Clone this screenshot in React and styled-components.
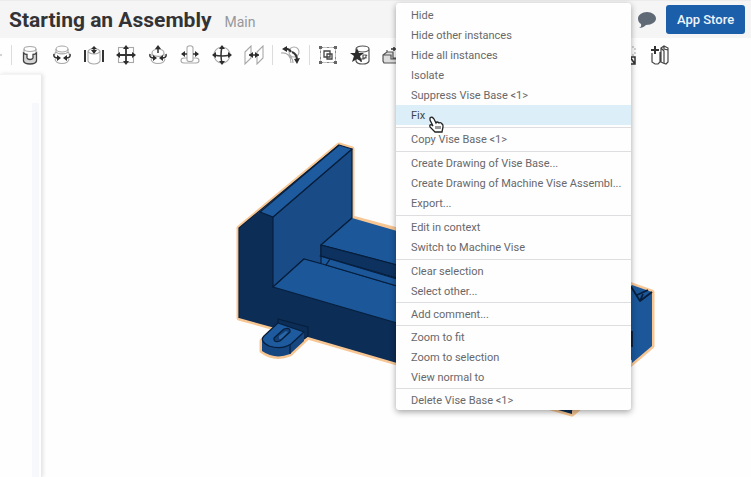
import React from "react";
import styled, { createGlobalStyle } from "styled-components";

const GlobalStyle = createGlobalStyle`
  * { box-sizing: border-box; }
  body {
    margin: 0;
    background: #fefefe;
    font-family: Roboto, "Liberation Sans", sans-serif;
    overflow: hidden;
  }
`;

const Page = styled.div`
  min-height: 100vh;
  display: flex;
  flex-direction: column;
`;

const Header = styled.header`
  height: 38px;
  display: flex;
  align-items: center;
  gap: 9px;
  padding: 0 6px 0 9px;
  background: #f5f5f6;
  border-top: 1px solid #ececec;
`;

const Title = styled.h1`
  margin: 0;
  font-family: Roboto, sans-serif;
  font-size: 21px;
  line-height: 28px;
  font-weight: 700;
  color: #333335;
  white-space: nowrap;
`;

const Workspace = styled.span`
  flex: 1;
  padding: 5px 0 0 4px;
  font-size: 14px;
  line-height: 18px;
  color: #97979a;
`;

const IconButton = styled.button`
  display: flex;
  padding: 0;
  border: 0;
  background: none;
`;

const StoreButton = styled.button`
  width: 79px;
  height: 29px;
  padding: 0;
  border: 0;
  border-radius: 3px;
  background: #1b5faa;
  color: #edf4fc;
  font: 500 13px/29px Roboto, sans-serif;
`;

const Toolbar = styled.nav`
  height: 36px;
  display: flex;
  align-items: center;
  padding-bottom: 2px;
  overflow: hidden;
`;

const Tool = styled.button`
  flex: none;
  width: 32px;
  height: 32px;
  display: flex;
  align-items: center;
  justify-content: center;
  padding: 0;
  border: 0;
  background: none;
`;

const Leading = styled.div`
  flex: none;
  width: 9px;
  display: flex;
  justify-content: flex-end;
  padding-right: 7px;
`;

const Separator = styled.span`
  flex: none;
  width: 1px;
  height: 20px;
  margin: 0 2px;
  background: #dcdcdc;
`;

const ToolGap = styled.span`
  flex: none;
  width: 204px;
`;

const Workbench = styled.main`
  flex: 1;
  display: flex;
  align-items: stretch;
`;

const Sidebar = styled.aside`
  flex: none;
  width: 42px;
  display: flex;
  justify-content: flex-end;
  padding: 28px 2px 0 0;
  border-top: 1px solid #f4f4f4;
  border-right: 1px solid #e9e9e9;
  box-shadow: 1px 0 4px rgba(0, 0, 0, 0.12);
`;

const ScrollTrack = styled.div`
  width: 7px;
  background: #f7f8fb;
`;

const Viewport = styled.section`
  flex: 1;
  min-width: 0;
  padding: 64px 0 0 188px;
`;

const Menu = styled.div`
  position: absolute;
  top: 3px;
  left: 396px;
  width: 235px;
  padding: 1px 0 0;
  border-radius: 3px;
  background: #fefefe;
  box-shadow: 0 2px 6px rgba(0, 0, 0, 0.36);
`;

const MenuGroup = styled.div`
  padding: 1px 0 ${(p) => (p.$tight ? 1 : 2)}px;
  & + & { border-top: 1px solid #dedee0; }
  &:last-child { padding-bottom: 0; }
`;

const MenuItem = styled.button`
  display: block;
  width: 100%;
  height: 20px;
  padding: 2px 4px 0 15px;
  border: 0;
  background: ${(p) => (p.$active ? "#dceff9" : "transparent")};
  color: ${(p) => (p.$active ? "#3c444c" : "#68686b")};
  font: 400 11px/18px Roboto, sans-serif;
  text-align: left;
  white-space: nowrap;
`;

const Pointer = styled.svg`
  position: absolute;
  top: 116px;
  left: 428px;
`;

const L = { fill: "none", stroke: "#a8a8a8", strokeWidth: 1.1 };
const D = { fill: "none", stroke: "#333", strokeWidth: 1.5 };
const F = { fill: "#2d2d2d" };

const glyphs = {
  fasten: (
    <>
      <path {...L} d="M4 4v5M16 4v5" />
      <ellipse {...L} cx="10" cy="4" rx="6" ry="2.500" />
      <path d="M3.500 8v8c1 4 12 4 13 0V8c-1 1-2 1.500-3.500 1.500v3.500c-1 2-5 2-6 0V9.500C5.500 9.500 4.500 9 3.500 8z" fill="#d4d4d4" stroke="#444" strokeWidth="1.300" />
    </>
  ),
  revolute: (
    <>
      <ellipse {...L} cx="10" cy="4" rx="6" ry="3" />
      <path {...L} d="M4 4v3q-2 2-1 3M16 4v3q2 2 1 3M4 7c2 2.500 10 2.500 12 0M3 14c1 6 13 6 14 0" />
      <path {...D} d="M2 9q-1 4 4 4M18 9q1 4-4 4" />
      <path {...F} d="M5 10l4 3-4 3zM15 10l-4 3 4 3z" />
    </>
  ),
  slider: (
    <>
      <path {...L} d="M4 6v10c2 4 10 4 12 0V6M4 6c2-3 10-3 12 0-2 4-10 4-12 0" />
      <path d="M1 5v12M19 5v12" {...D} strokeWidth="2" />
      <path {...D} d="M10 8V2" />
      <path {...F} d="M7 4l3-3 3 3zM7 5h6l-3 4z" />
    </>
  ),
  planar: (
    <>
      <rect {...L} x="2.500" y="2.500" width="15" height="15" />
      <path {...D} d="M10 3v14M3 10h14" strokeWidth="1.800" />
      <path {...F} d="M7 4l3-4 3 4zM7 16l3 4 3-4zM4 7l-4 3 4 3zM16 7l4 3-4 3z" />
    </>
  ),
  cylindrical: (
    <>
      <path {...L} d="M4 8v3M16 8v3M4 8c0-5 12-5 12 0s-12 4-12 0M3 14c1 6 13 6 14 0" />
      <path {...D} d="M10 8V2M2 9q-1 4 4 4M18 9q1 4-4 4" />
      <path {...F} d="M7 4l3-4 3 4zM5 10l4 3-4 3zM15 10l-4 3 4 3z" />
    </>
  ),
  pinslot: (
    <>
      <path {...L} d="M7 15V3c0-3 6-3 6 0v12c0 2-6 2-6 0zM7 13H4c-4 0-4 5 0 5h12c4 0 4-5 0-5h-3" />
      <path {...D} d="M2 9h5M13 9h5" />
      <path {...F} d="M5 6L1 9l4 3zM15 6l4 3-4 3z" />
    </>
  ),
  ball: (
    <>
      <circle {...L} cx="10" cy="10" r="8" />
      <path {...D} d="M10 2q-2 8 0 16M2 10q8 2 16 0" />
      <path {...F} d="M7 4l3-4 3 4zM7 16l3 4 3-4zM4 7l-4 3 4 3zM16 7l4 3-4 3z" />
    </>
  ),
  parallel: (
    <>
      <path {...L} d="M1 7l6-6v12l-6 6zM13 7l6-6v12l-6 6z" />
      <path {...D} d="M5 10h10" />
      <path {...F} d="M9 7l-4 3 4 3zM11 7l4 3-4 3z" />
    </>
  ),
  tangent: (
    <>
      <circle {...L} cx="13" cy="7" r="5" />
      <path {...L} d="M0 8c7-1 10 4 10 10M4 8c5 2 8 5 8 10" />
      <path {...D} d="M3 4q5-1 7 3M11 7q5 2 5 8" strokeWidth="2" />
      <path {...F} d="M6 1L1 4l5 3zM13 14l3 5 3-6z" />
    </>
  ),
  group: (
    <>
      <rect x="2.500" y="2.500" width="15" height="15" fill="none" stroke="#888" strokeDasharray="3 1 1 1" />
      <path d="M6 6h6v6H6zM9 9h5v5H9z" fill="none" stroke="#444" strokeWidth="1.300" />
      <path fill="#666" d="M1 1h3v3H1zM16 1h3v3h-3zM1 16h3v3H1zM16 16h3v3h-3z" />
    </>
  ),
  favorite: (
    <>
      <path fill="none" stroke="#555" strokeWidth="1.200" d="M6 4v12c1 4 12 4 13 0V4M6 4c0-4 13-4 13 0s-13 4-13 0M13 10h3v3h-3zM11 17v-3h3l3-4" />
      <path {...F} d="M7 3l2 5h5l-4 3 2 6-5-3-5 3 2-6-4-3h5z" />
    </>
  ),
  insert: (
    <>
      <path fill="#ddd" stroke="#555" strokeWidth="1.200" d="M1 10l4-3h6v6h8v5H2l-1-2zM5 7V5M1 10h8v4h9" />
      <path {...D} d="M12 6V2M9 4h6" />
    </>
  ),
  replicate: (
    <>
      <rect x="2" y="2" width="15" height="8" fill="none" stroke="#aaa" strokeDasharray="2 2" />
      <path fill="none" stroke="#333" strokeWidth="1.500" d="M12 12h5v7h-5zM12 12l5 7" />
    </>
  ),
  config: (
    <>
      <path fill="none" stroke="#444" strokeWidth="1.200" d="M2 8v9l3 2h3l2-2V7M11 3l3-2 4 2v14l-2 2-3-1-2-1zM11 3l3 3v12M14 1v3l4 1" />
      <path {...D} d="M5 1v8M1 5h8" strokeWidth="2" />
    </>
  ),
};

const Glyph = ({ name }) => (
  <svg width="20" height="20" viewBox="0 0 20 20" aria-hidden="true">{glyphs[name]}</svg>
);

const ToolItem = ({ name }) => (
  <Tool type="button" aria-label={name}><Glyph name={name} /></Tool>
);

const mateTools = ["fasten", "revolute", "slider", "planar", "cylindrical", "pinslot", "ball", "parallel"];

const menuGroups = [
  { items: ["Hide", "Hide other instances", "Hide all instances", "Isolate", "Suppress Vise Base <1>", "Fix"] },
  { items: ["Copy Vise Base <1>"] },
  { items: ["Create Drawing of Vise Base...", "Create Drawing of Machine Vise Assembl...", "Export..."] },
  { items: ["Edit in context", "Switch to Machine Vise"] },
  { items: ["Clear selection", "Select other..."], tight: true },
  { items: ["Add comment..."], tight: true },
  { items: ["Zoom to fit", "Zoom to selection", "View normal to"], tight: true },
  { items: ["Delete Vise Base <1>"] },
];

const ViseModel = () => (
  <svg width="430" height="282" viewBox="230 138 430 282" role="img" aria-label="Vise base" strokeLinejoin="round">
    <path
      d="M239 228L339 145L352 149V218L397 230L632 285L652 292V346L572 414L308 337L290 354Q275 360 262 351V341L275 328L239 318z"
      fill="#1b5799" stroke="#f7c693" strokeWidth="5"
    />
    <path d="M239 228L260 211L273 217V287L397 323V363L308 337L239 318z" fill="#0c2d55" />
    <path d="M397 323L572 370V414L397 363z" fill="#0c2d55" />
    <g stroke="#071e3c" strokeWidth="1.200">
      <path d="M273 217L352 149V218L321 245V264L304 259L273 287z" fill="#194b87" />
      <path d="M260 212L339 145L352 149L273 217z" fill="#1d5a9e" />
      <path d="M352 218L321 245L397 265V231z" fill="#1b5799" stroke="none" />
      <path d="M352 218L321 245L397 265" fill="none" />
      <path d="M321 245V256L397 278V265z" fill="#0d3260" />
      <path d="M304 259L326 265L397 286V323L273 287z" fill="#1b5799" />
      <path d="M320 256L330 259L326 265L397 286V279z" fill="#1b5799" />
      <path d="M239 318V228L339 145" fill="none" />
      <path d="M278 319L308 327V336L304 339L278 324z" fill="#0c2d55" />
      <path d="M278 323L304 332V341L290 354Q275 360 262 351V341L264 337z" fill="#164780" stroke="none" />
      <path d="M278 323L304 332L291 344Q282 350 269 346Q259 341 264 336z" fill="#1d5a9e" />
      <path d="M290 345V354" fill="none" />
      <path d="M274 338L284 329Q291 327 290 332L280 341Q273 343 274 338z" fill="#123f75" />
      <path d="M279 339V336L286 331L288 332L281 339z" fill="#2866a8" stroke="none" />
      <path d="M632 285L652 292V346L632 363z" fill="#1b5799" stroke="none" />
      <path d="M630 285L640 301L652 292M637 295L648 290M640 301L643 294M632 331V347" fill="none" strokeWidth="1.800" />
    </g>
  </svg>
);

export default function App() {
  return (
    <Page>
      <GlobalStyle />
      <Header>
        <Title>Starting an Assembly</Title>
        <Workspace>Main</Workspace>
        <IconButton type="button" aria-label="Comments">
          <svg width="20" height="18" viewBox="0 0 20 18">
            <path d="M10 1c5 0 9 3 9 6.500S15 14 9 14c-2 2-4 3-7 3 2-1 2.500-2 2-4C2 12 1 10 1 7.500 1 4 5 1 10 1z" fill="#606a77" />
          </svg>
        </IconButton>
        <StoreButton type="button">App Store</StoreButton>
      </Header>
      <Toolbar aria-label="Assembly tools">
        <Leading>
          <svg width="12" height="12" viewBox="0 0 12 12"><circle cx="6" cy="6" r="5" fill="#ddd" stroke="#777" strokeWidth="1.500" /></svg>
        </Leading>
        <Separator />
        {mateTools.map((name) => <ToolItem key={name} name={name} />)}
        <Separator />
        <ToolItem name="tangent" />
        <Separator />
        <ToolItem name="group" />
        <ToolItem name="favorite" />
        <ToolItem name="insert" />
        <ToolGap />
        <ToolItem name="replicate" />
        <ToolItem name="config" />
      </Toolbar>
      <Workbench>
        <Sidebar><ScrollTrack /></Sidebar>
        <Viewport><ViseModel /></Viewport>
      </Workbench>
      <Menu role="menu">
        {menuGroups.map((group) => (
          <MenuGroup key={group.items[0]} $tight={group.tight}>
            {group.items.map((label) => (
              <MenuItem key={label} type="button" role="menuitem" $active={label === "Fix"}>{label}</MenuItem>
            ))}
          </MenuGroup>
        ))}
      </Menu>
      <Pointer width="16" height="17" viewBox="0 0 16 17" aria-hidden="true">
        <path d="M2 2q2-2 4 1l2 4q1-2 3 0 2-1 3 1 1 0 1 3l-1 5H7L2 11Q1 8 4 9l1 1-3-6z" fill="#fff" stroke="#222" strokeWidth="1.300" />
        <path d="M8 10v3M10 10v3M12 10v3" stroke="#333" />
      </Pointer>
    </Page>
  );
}
